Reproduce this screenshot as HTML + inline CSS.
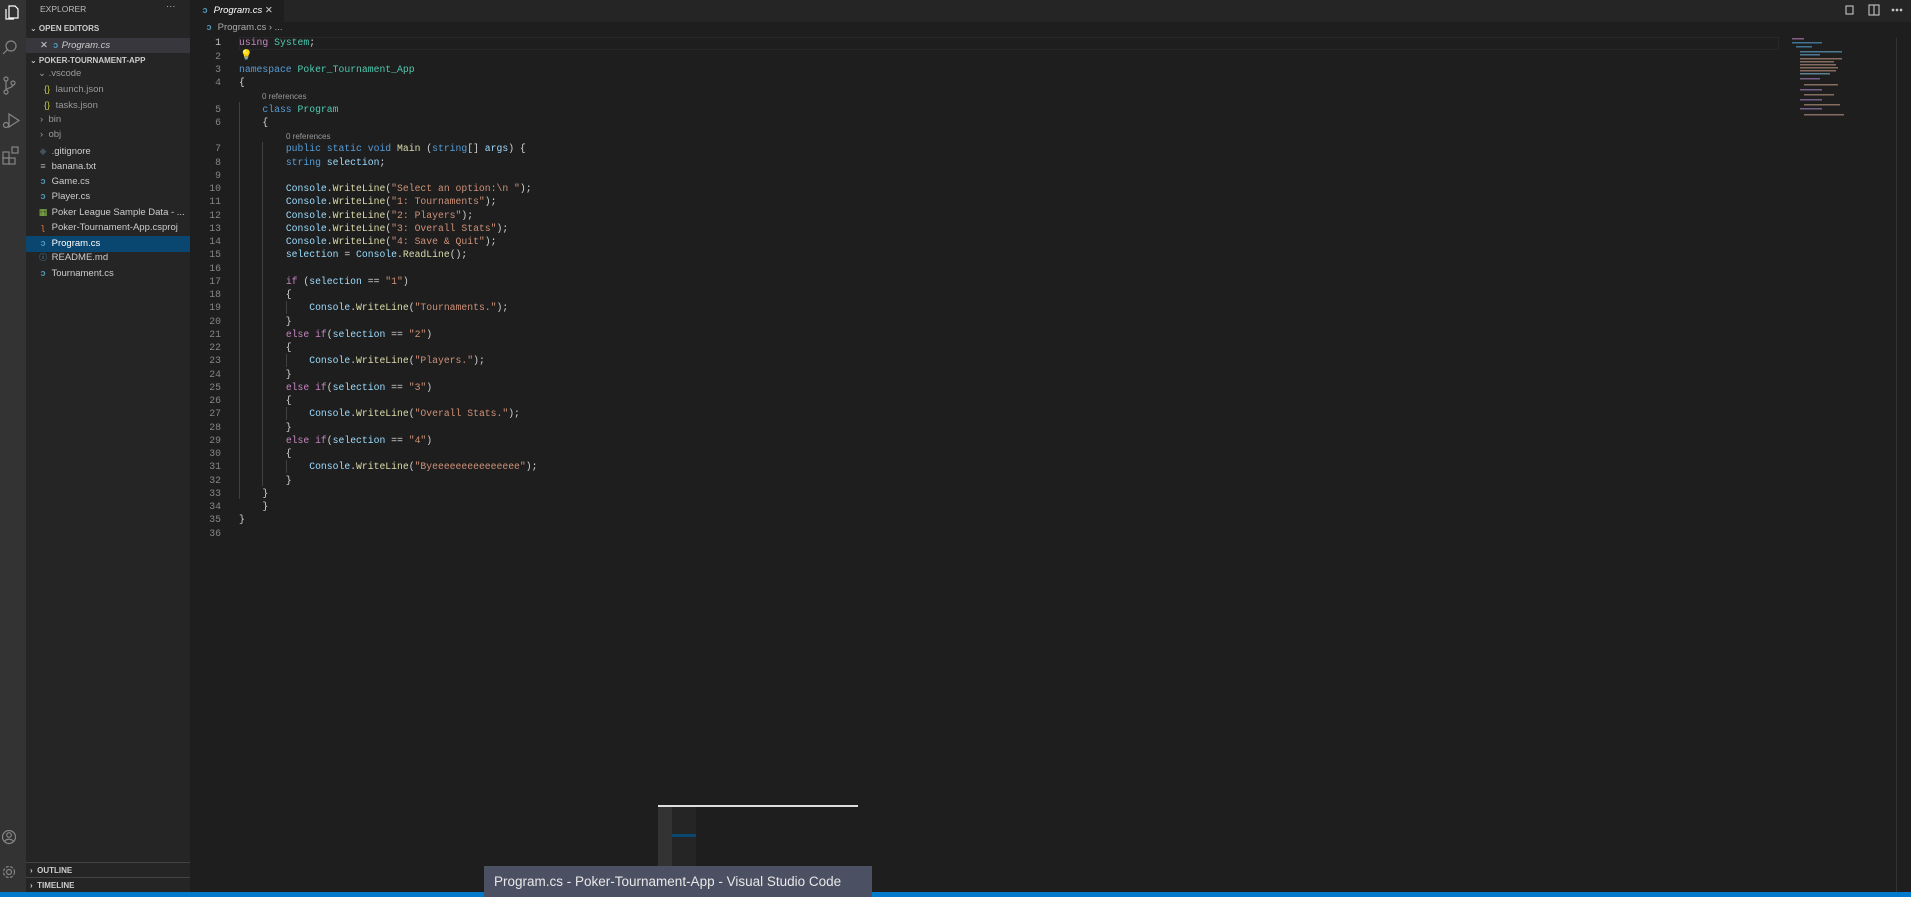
<!DOCTYPE html>
<html><head><meta charset="utf-8"><style>
*{margin:0;padding:0;box-sizing:border-box}
body{width:1911px;height:897px;background:#1e1e1e;overflow:hidden;position:relative;font-family:"Liberation Sans","DejaVu Sans",sans-serif;color:#ccc}
.ab{position:absolute;left:0;top:0;width:26px;height:892px;background:#333}
.sb{position:absolute;left:26px;top:0;width:164px;height:892px;background:#252526}
.t{position:absolute;white-space:nowrap;font-size:9.5px;line-height:12px;height:12px;overflow:visible}
.i{display:inline-block;width:10px;font-size:9px;line-height:12px;text-align:center;margin-right:1px}
.tabs{position:absolute;left:190px;top:0;width:1721px;height:22px;background:#252526}
.tab{position:absolute;left:190px;top:0;width:94px;height:22px;background:#1e1e1e}
.code{position:absolute;left:239px;font-family:"Liberation Mono",monospace;font-size:9.75px;white-space:pre;color:#d4d4d4;line-height:13.25px}
.ln{position:absolute;left:190px;width:31px;text-align:right;font-family:"Liberation Mono",monospace;font-size:9.75px;color:#858585;line-height:13.25px}
.k{color:#569cd6}.c{color:#c586c0}.ty{color:#4ec9b0}.v{color:#9cdcfe}.m{color:#dcdcaa}.s{color:#ce9178}
.cl{position:absolute;font-size:8px;color:#999;font-family:"Liberation Sans",sans-serif}
.g{position:absolute;width:1px;background:#404040}
</style></head><body>
<div class="ab">
<svg width="26" height="200" style="position:absolute;left:0;top:0" fill="none" stroke="#c5c5c5" stroke-width="1.2">
<path d="M9 6h6l3 3v9h-9z M6 9v10h8" stroke="#fff"/>
<circle cx="11" cy="46" r="5" stroke="#858585"/><path d="M7.5 49.5L3 54" stroke="#858585"/>
<g stroke="#858585"><circle cx="6" cy="79" r="2"/><circle cx="6" cy="92" r="2"/><circle cx="13" cy="83" r="2"/><path d="M6 81v9M13 85c0 3-7 3-7 5"/></g>
<g stroke="#858585"><path d="M9 114v13l10-6.5z"/><circle cx="6" cy="125" r="2.5"/></g>
<g stroke="#858585"><rect x="3" y="158" width="6" height="6"/><rect x="9" y="158" width="6" height="6"/><rect x="3" y="152" width="6" height="6"/><rect x="12" y="147" width="6" height="6"/></g>
</svg>
<svg width="26" height="60" style="position:absolute;left:0;top:830" fill="none" stroke="#858585" stroke-width="1.2">
<circle cx="9" cy="7" r="6.5"/><circle cx="9" cy="5" r="2.3"/><path d="M4.5 11.5c2-3 7-3 9 0"/>
<circle cx="9" cy="42" r="2.5"/><circle cx="9" cy="42" r="5.5" stroke-dasharray="3 1.5"/>
</svg>
</div>
<div class="sb">
<div class="t" style="left:14px;top:3px;font-size:8.5px;color:#bbb">EXPLORER</div>
<div class="t" style="left:140px;top:1px;color:#bbb">···</div>
<div class="t" style="left:4px;top:23px;font-size:8px;font-weight:bold;color:#ccc">⌄ OPEN EDITORS</div>
<div style="position:absolute;left:0;top:38px;width:164px;height:15px;background:#37373d"></div>
<div class="t" style="left:14px;top:39px;color:#ccc">✕ <span class="i" style="color:#519aba;font-weight:bold">ↄ</span><i>Program.cs</i></div>
<div class="t" style="left:4px;top:55px;font-size:8px;font-weight:bold;color:#ccc">⌄ POKER-TOURNAMENT-APP</div>
<div class="t" style="left:12px;top:68px;color:#999">⌄ .vscode</div>
<div class="t" style="left:16px;top:83px;color:#999"><span class="i" style="color:#cbcb41">{}</span> launch.json</div>
<div class="t" style="left:16px;top:99px;color:#999"><span class="i" style="color:#cbcb41">{}</span> tasks.json</div>
<div class="t" style="left:14px;top:114px;color:#999">›&nbsp; bin</div>
<div class="t" style="left:14px;top:129px;color:#999">›&nbsp; obj</div>
<div style="position:absolute;left:0;top:236px;width:164px;height:16px;background:#094771"></div>
<div class="t" style="left:12px;top:145px;color:#ccc"><span class="i" style="color:#41535b">◆</span> .gitignore</div>
<div class="t" style="left:12px;top:160px;color:#ccc"><span class="i" style="color:#aaa">≡</span> banana.txt</div>
<div class="t" style="left:12px;top:175px;color:#ccc"><span class="i" style="color:#519aba;font-weight:bold">ↄ</span> Game.cs</div>
<div class="t" style="left:12px;top:190px;color:#ccc"><span class="i" style="color:#519aba;font-weight:bold">ↄ</span> Player.cs</div>
<div class="t" style="left:12px;top:206px;color:#ccc"><span class="i" style="color:#8dc149">▦</span> Poker League Sample Data - ...</div>
<div class="t" style="left:12px;top:221px;color:#ccc"><span class="i" style="color:#e37933">ʅ</span> Poker-Tournament-App.csproj</div>
<div class="t" style="left:12px;top:237px;color:#fff"><span class="i" style="color:#519aba;font-weight:bold">ↄ</span> Program.cs</div>
<div class="t" style="left:12px;top:252px;color:#ccc"><span class="i" style="color:#519aba;font-size:8px">ⓘ</span> README.md</div>
<div class="t" style="left:12px;top:267px;color:#ccc"><span class="i" style="color:#519aba;font-weight:bold">ↄ</span> Tournament.cs</div>
<div style="position:absolute;left:0;top:862px;width:164px;height:1px;background:#444"></div>
<div class="t" style="left:4px;top:865px;font-size:8px;font-weight:bold;color:#ccc">›&nbsp; OUTLINE</div>
<div style="position:absolute;left:0;top:877px;width:164px;height:1px;background:#444"></div>
<div class="t" style="left:4px;top:880px;font-size:8px;font-weight:bold;color:#ccc">›&nbsp; TIMELINE</div>
</div>
<div class="tabs"></div><div class="tab"></div>
<div class="t" style="left:200px;top:4px;color:#fff"><span class="i" style="color:#519aba;font-weight:bold">ↄ</span> <i>Program.cs</i> <span style="color:#ccc">✕</span></div>
<div class="t" style="left:204px;top:21px;color:#aaa"><span class="i" style="color:#519aba;font-weight:bold">ↄ</span> Program.cs › ...</div>
<svg width="70" height="22" style="position:absolute;left:1841px;top:0" fill="none" stroke="#c5c5c5" stroke-width="1.1">
<rect x="5" y="6" width="7" height="8"/><rect x="28" y="5" width="10" height="10"/><path d="M33 5v10"/>
<circle cx="52" cy="10" r=".8" fill="#c5c5c5"/><circle cx="56" cy="10" r=".8" fill="#c5c5c5"/><circle cx="60" cy="10" r=".8" fill="#c5c5c5"/>
</svg>
<div style="position:absolute;left:239px;top:37px;width:1540px;height:13px;border:1px solid #282828"></div>
<div class="g" style="left:239px;top:102px;height:397px"></div>
<div class="g" style="left:262px;top:142px;height:344px"></div>
<div class="g" style="left:286px;top:301px;height:13px"></div>
<div class="g" style="left:286px;top:354px;height:13px"></div>
<div class="g" style="left:286px;top:407px;height:13px"></div>
<div class="g" style="left:286px;top:460px;height:13px"></div>
<div class="ln" style="top:36.4px"><span style="color:#c6c6c6">1</span><br>2<br>3<br>4<br>&nbsp;<br>5<br>6<br>&nbsp;<br>7<br>8<br>9<br>10<br>11<br>12<br>13<br>14<br>15<br>16<br>17<br>18<br>19<br>20<br>21<br>22<br>23<br>24<br>25<br>26<br>27<br>28<br>29<br>30<br>31<br>32<br>33<br>34<br>35<br>36</div>
<div class="cl" style="left:262px;top:92px">0 references</div>
<div class="cl" style="left:286px;top:132px">0 references</div>
<div class="t" style="left:240px;top:50px;font-size:10px">💡</div>
<div class="code" style="top:36.4px"><span class="c">using</span> <span class="ty">System</span>;

<span class="k">namespace</span> <span class="ty">Poker_Tournament_App</span>
{

    <span class="k">class</span> <span class="ty">Program</span>
    {

        <span class="k">public</span> <span class="k">static</span> <span class="k">void</span> <span class="m">Main</span> (<span class="k">string</span>[] <span class="v">args</span>) {
        <span class="k">string</span> <span class="v">selection</span>;

        <span class="v">Console</span>.<span class="m">WriteLine</span>(<span class="s">"Select an option:\n "</span>);
        <span class="v">Console</span>.<span class="m">WriteLine</span>(<span class="s">"1: Tournaments"</span>);
        <span class="v">Console</span>.<span class="m">WriteLine</span>(<span class="s">"2: Players"</span>);
        <span class="v">Console</span>.<span class="m">WriteLine</span>(<span class="s">"3: Overall Stats"</span>);
        <span class="v">Console</span>.<span class="m">WriteLine</span>(<span class="s">"4: Save &amp; Quit"</span>);
        <span class="v">selection</span> = <span class="v">Console</span>.<span class="m">ReadLine</span>();

        <span class="c">if</span> (<span class="v">selection</span> == <span class="s">"1"</span>)
        {
            <span class="v">Console</span>.<span class="m">WriteLine</span>(<span class="s">"Tournaments."</span>);
        }
        <span class="c">else</span> <span class="c">if</span>(<span class="v">selection</span> == <span class="s">"2"</span>)
        {
            <span class="v">Console</span>.<span class="m">WriteLine</span>(<span class="s">"Players."</span>);
        }
        <span class="c">else</span> <span class="c">if</span>(<span class="v">selection</span> == <span class="s">"3"</span>)
        {
            <span class="v">Console</span>.<span class="m">WriteLine</span>(<span class="s">"Overall Stats."</span>);
        }
        <span class="c">else</span> <span class="c">if</span>(<span class="v">selection</span> == <span class="s">"4"</span>)
        {
            <span class="v">Console</span>.<span class="m">WriteLine</span>(<span class="s">"Byeeeeeeeeeeeeeee"</span>);
        }
    }
    }
}
</div>
<svg width="80" height="80" style="position:absolute;left:1790px;top:36px">
<g opacity=".8">
<rect x="2" y="2" width="12" height="1.5" fill="#a070a0"/><rect x="2" y="6" width="30" height="1.5" fill="#4a8ab0"/>
<rect x="6" y="10" width="16" height="1.5" fill="#4a8ab0"/><rect x="10" y="15" width="42" height="1.5" fill="#5a90b0"/><rect x="10" y="18" width="20" height="1.5" fill="#5a90b0"/>
<rect x="10" y="22" width="42" height="1.5" fill="#a08070"/><rect x="10" y="25" width="34" height="1.5" fill="#a08070"/><rect x="10" y="28" width="36" height="1.5" fill="#a08070"/><rect x="10" y="31" width="38" height="1.5" fill="#a08070"/><rect x="10" y="34" width="36" height="1.5" fill="#a08070"/><rect x="10" y="37" width="30" height="1.5" fill="#6a9ab0"/>
<rect x="10" y="42" width="20" height="1.5" fill="#8a70a0"/><rect x="14" y="48" width="34" height="1.5" fill="#a08070"/><rect x="10" y="53" width="22" height="1.5" fill="#8a70a0"/><rect x="14" y="58" width="30" height="1.5" fill="#a08070"/><rect x="10" y="63" width="22" height="1.5" fill="#8a70a0"/><rect x="14" y="68" width="36" height="1.5" fill="#a08070"/><rect x="10" y="72" width="22" height="1.5" fill="#8a70a0"/><rect x="14" y="78" width="40" height="1.5" fill="#a08070"/>
</g></svg>
<div style="position:absolute;left:1896px;top:38px;width:1px;height:854px;background:#333"></div>
<div style="position:absolute;left:0;top:892px;width:1911px;height:5px;background:#007acc"></div>
<div style="position:absolute;left:658px;top:805px;width:200px;height:61px;background:#1e1e1e;border-top:2px solid #ddd">
<div style="position:absolute;left:0;top:0;width:14px;height:59px;background:#333"></div>
<div style="position:absolute;left:14px;top:0;width:24px;height:59px;background:#252526"></div>
<div style="position:absolute;left:14px;top:27px;width:24px;height:3px;background:#094771"></div>
</div>
<div style="position:absolute;left:484px;top:866px;width:388px;height:31px;background:#4b5063;color:#e8e8e8;font-size:13.5px;padding:8px 0 0 10px;white-space:nowrap">Program.cs - Poker-Tournament-App - Visual Studio Code</div>
</body></html>
